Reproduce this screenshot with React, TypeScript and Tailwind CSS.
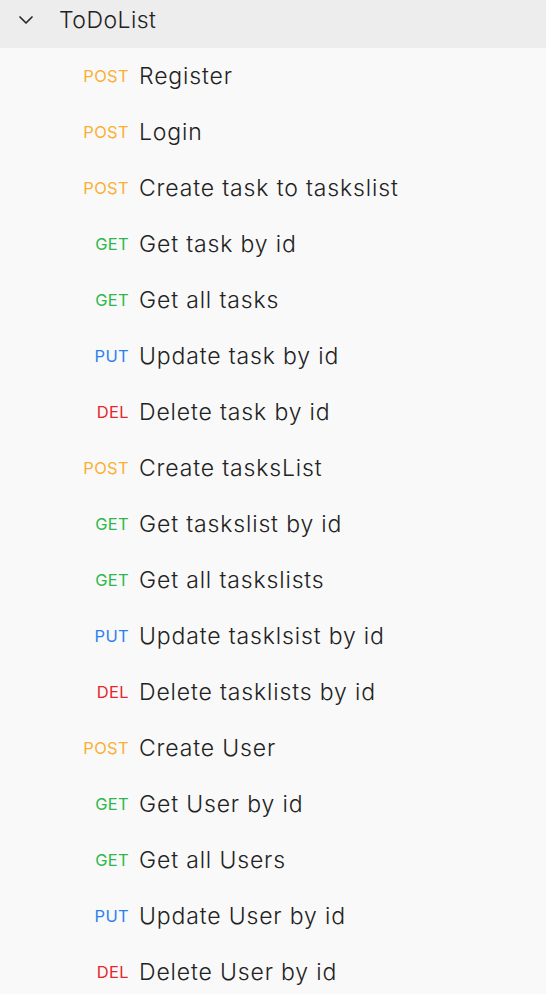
import { ChevronDown } from "lucide-react";

type Req = { method: "POST" | "GET" | "PUT" | "DEL"; name: string };

const requests: Req[] = [
  { method: "POST", name: "Register" },
  { method: "POST", name: "Login" },
  { method: "POST", name: "Create task to taskslist" },
  { method: "GET", name: "Get task by id" },
  { method: "GET", name: "Get all tasks" },
  { method: "PUT", name: "Update task by id" },
  { method: "DEL", name: "Delete task by id" },
  { method: "POST", name: "Create tasksList" },
  { method: "GET", name: "Get taskslist by id" },
  { method: "GET", name: "Get all taskslists" },
  { method: "PUT", name: "Update tasklsist by id" },
  { method: "DEL", name: "Delete tasklists by id" },
  { method: "POST", name: "Create User" },
  { method: "GET", name: "Get User by id" },
  { method: "GET", name: "Get all Users" },
  { method: "PUT", name: "Update User by id" },
  { method: "DEL", name: "Delete User by id" },
];

const methodColor = {
  POST: "text-[#fbb034]",
  GET: "text-[#2fb84a]",
  PUT: "text-[#2d7ff0]",
  DEL: "text-[#e8262b]",
};

const App = () => {
  return (
    <div className="h-[994px] w-[546px] overflow-hidden bg-[#f9f9f9] font-['Inter',sans-serif] text-[#222222]">
      <div className="flex h-[48px] items-center bg-[#ededed] pb-[8px]">
        <ChevronDown className="ml-[14px] h-[24px] w-[24px] text-[#2a2a2a]" strokeWidth={1.7} />
        <span className="ml-[21px] text-[23px] leading-none tracking-[0.02em] font-light">ToDoList</span>
      </div>
      {requests.map((r, i) => (
        <div key={i} className="flex h-[56px] items-center">
          <span className={`w-[129px] text-right text-[16.5px] leading-none tracking-[0.02em] ${methodColor[r.method]}`}>
            {r.method}
          </span>
          <span className="ml-[10px] text-[23px] leading-none tracking-[0.037em] font-light">{r.name}</span>
        </div>
      ))}
    </div>
  );
};

export default App;
